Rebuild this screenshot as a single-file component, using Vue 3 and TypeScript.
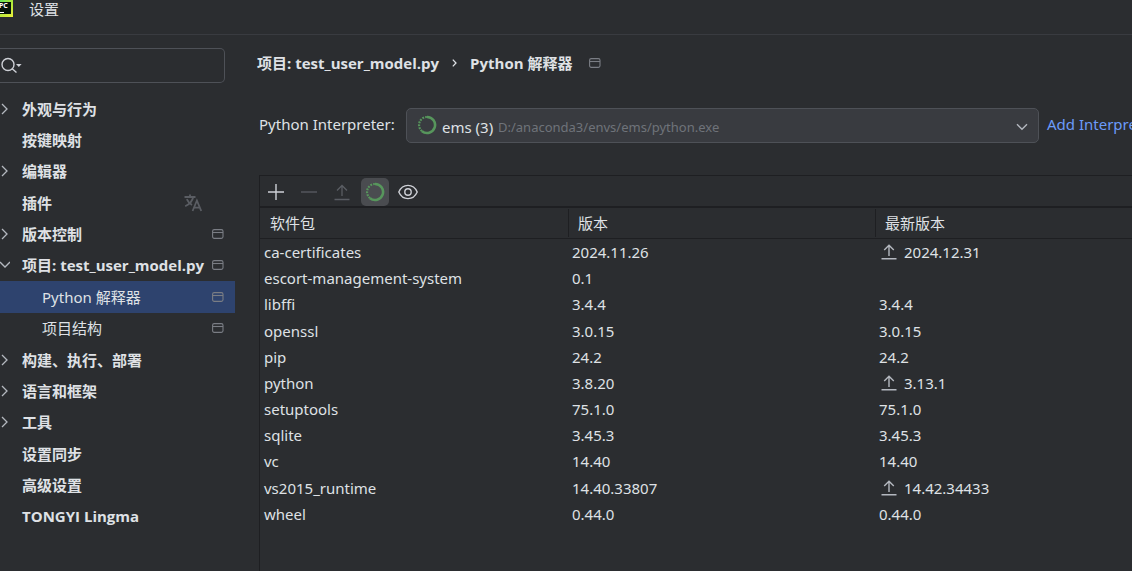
<script setup lang="ts">
import { ref } from 'vue'

interface NavItem {
  label: string
  arrow?: 'right' | 'down'
  child?: boolean
  project?: boolean
  translate?: boolean
}

interface Pkg {
  name: string
  version: string
  latest: string
  upgrade?: boolean
}

const nav: NavItem[] = [
  { label: '外观与行为', arrow: 'right' },
  { label: '按键映射' },
  { label: '编辑器', arrow: 'right' },
  { label: '插件', translate: true },
  { label: '版本控制', arrow: 'right', project: true },
  { label: '项目: test_user_model.py', arrow: 'down', project: true },
  { label: 'Python 解释器', child: true, project: true },
  { label: '项目结构', child: true, project: true },
  { label: '构建、执行、部署', arrow: 'right' },
  { label: '语言和框架', arrow: 'right' },
  { label: '工具', arrow: 'right' },
  { label: '设置同步' },
  { label: '高级设置' },
  { label: 'TONGYI Lingma' },
]

const packages: Pkg[] = [
  { name: 'ca-certificates', version: '2024.11.26', latest: '2024.12.31', upgrade: true },
  { name: 'escort-management-system', version: '0.1', latest: '' },
  { name: 'libffi', version: '3.4.4', latest: '3.4.4' },
  { name: 'openssl', version: '3.0.15', latest: '3.0.15' },
  { name: 'pip', version: '24.2', latest: '24.2' },
  { name: 'python', version: '3.8.20', latest: '3.13.1', upgrade: true },
  { name: 'setuptools', version: '75.1.0', latest: '75.1.0' },
  { name: 'sqlite', version: '3.45.3', latest: '3.45.3' },
  { name: 'vc', version: '14.40', latest: '14.40' },
  { name: 'vs2015_runtime', version: '14.40.33807', latest: '14.42.34433', upgrade: true },
  { name: 'wheel', version: '0.44.0', latest: '0.44.0' },
]

const selected = ref('Python 解释器')
const search = ref('')
const interpreter = ref('ems')
</script>

<template>
  <div class="window">
    <header class="titlebar">
      <svg class="logo" width="13" height="18" viewBox="0 0 13 18" aria-hidden="true">
        <defs>
          <linearGradient id="logo-edge" x1="0" y1="0" x2="1" y2="1">
            <stop offset="0" stop-color="#3fe06a" />
            <stop offset="0.5" stop-color="#a8e83a" />
            <stop offset="1" stop-color="#ecf03c" />
          </linearGradient>
        </defs>
        <rect x="-6" y="0" width="19" height="17" fill="url(#logo-edge)" />
        <rect x="-4" y="2" width="15" height="12" fill="#06140a" />
        <text x="-1" y="8" font-size="7" font-weight="700" fill="#ffffff">PC</text>
        <rect x="0" y="12" width="4" height="1" fill="#ffffff" />
      </svg>
      <span>设置</span>
    </header>

    <div class="body">
      <aside class="sidebar">
        <div class="search">
          <svg width="22" height="18" viewBox="0 0 22 18" fill="none" aria-hidden="true">
            <circle cx="8" cy="7.5" r="6" stroke="#ced0d6" stroke-width="1.4" />
            <path d="M12.2 11.7L16.5 15.6" stroke="#ced0d6" stroke-width="1.4" />
            <path d="M16 7H21.6L18.8 10Z" fill="#ced0d6" />
          </svg>
          <input v-model="search" type="text" aria-label="搜索设置" />
        </div>
        <nav class="tree">
          <button
            v-for="item in nav"
            :key="item.label"
            type="button"
            class="node"
            :class="{ child: item.child, active: item.label === selected }"
            @click="selected = item.label"
          >
            <span class="arrow">
              <svg v-if="item.arrow === 'right'" width="10" height="12" viewBox="0 0 10 12" fill="none" aria-hidden="true">
                <path d="M2 1L7 6L2 11" stroke="#b4b8bf" stroke-width="1.3" />
              </svg>
              <svg v-else-if="item.arrow === 'down'" width="10" height="12" viewBox="0 0 10 12" fill="none" aria-hidden="true">
                <path d="M0 3L5 8L10 3" stroke="#b4b8bf" stroke-width="1.3" />
              </svg>
            </span>
            <span class="label">{{ item.label }}</span>
            <svg v-if="item.translate" class="translate" width="18" height="18" viewBox="0 0 18 18" fill="none" stroke="#5a5d63" stroke-width="1.8" aria-hidden="true">
              <path d="M0.5 3H11.5M6 0.5V3M9.2 3C8.6 6.2 5.5 10.2 1.2 12.2M2.8 5.2C4 8 5.8 9.7 8 11" />
              <path d="M8.6 17L12.9 6.5L17.2 17M10.2 13.6H15.6" />
            </svg>
            <svg v-if="item.project" class="project" width="12" height="12" viewBox="0 0 12 12" fill="none" aria-hidden="true">
              <rect x="0.6" y="1.6" width="10.4" height="8.8" rx="1.6" stroke="#7a7d84" stroke-width="1.1" />
              <path d="M1 4.5H11" stroke="#7a7d84" stroke-width="1.1" />
            </svg>
          </button>
        </nav>
      </aside>

      <main class="content">
        <div class="crumbs">
          <span>项目: test_user_model.py</span>
          <svg width="5" height="8" viewBox="0 0 5 8" fill="none" aria-hidden="true">
            <path d="M0.8 0.6L4 4L0.8 7.4" stroke="#dfe1e5" stroke-width="1.3" />
          </svg>
          <span>Python 解释器</span>
          <svg width="12" height="12" viewBox="0 0 12 12" fill="none" aria-hidden="true">
            <rect x="0.6" y="1.6" width="10.4" height="8.8" rx="1.6" stroke="#7a7d84" stroke-width="1.1" />
            <path d="M1 4.5H11" stroke="#7a7d84" stroke-width="1.1" />
          </svg>
        </div>

        <div class="interpreter">
          <label for="interpreter">Python Interpreter:</label>
          <div class="combo">
            <select id="interpreter" v-model="interpreter">
              <option value="ems">ems (3)</option>
            </select>
            <svg class="spinner" width="20" height="20" viewBox="0 0 20 20" fill="none" aria-hidden="true">
              <path d="M10 2A8 8 0 1 1 5 16.2" stroke="#57965c" stroke-width="2.6" />
              <path d="M5 16.2A8 8 0 0 1 10 2" stroke="#57965c" stroke-width="2.2" stroke-dasharray="1.8 1.1" />
            </svg>
            <span class="path">D:/anaconda3/envs/ems/python.exe</span>
            <svg class="chevron" width="12" height="8" viewBox="0 0 12 8" fill="none" aria-hidden="true">
              <path d="M1 1.2L6 6.2L11 1.2" stroke="#b4b8bf" stroke-width="1.4" />
            </svg>
          </div>
          <a href="#">Add Interpreter</a>
        </div>

        <section class="packages">
          <div class="toolbar">
            <button type="button" aria-label="安装">
              <svg width="18" height="18" viewBox="0 0 18 18" aria-hidden="true">
                <path d="M9 1V17M1 9H17" stroke="#ced0d6" stroke-width="1.4" />
              </svg>
            </button>
            <button type="button" aria-label="卸载" disabled>
              <svg width="18" height="18" viewBox="0 0 18 18" aria-hidden="true">
                <path d="M1 9H17" stroke="#5a5d63" stroke-width="1.3" />
              </svg>
            </button>
            <button type="button" aria-label="升级" disabled>
              <svg width="18" height="18" viewBox="0 0 18 18" fill="none" aria-hidden="true">
                <path d="M9 13V3M4 7.5L9 2.5L14 7.5M1.5 16.5H16.5" stroke="#5a5d63" stroke-width="1.3" />
              </svg>
            </button>
            <button type="button" class="on" aria-label="使用 Conda 软件包管理器">
              <svg width="20" height="20" viewBox="0 0 20 20" fill="none" aria-hidden="true">
                <path d="M10 2A8 8 0 1 1 5 16.2" stroke="#57965c" stroke-width="2.6" />
                <path d="M5 16.2A8 8 0 0 1 10 2" stroke="#57965c" stroke-width="2.2" stroke-dasharray="1.8 1.1" />
              </svg>
            </button>
            <button type="button" aria-label="显示早期版本">
              <svg width="20" height="16" viewBox="0 0 20 16" fill="none" stroke="#ced0d6" stroke-width="1.4" aria-hidden="true">
                <path d="M0.8 8C2.6 3.8 6 1.4 10 1.4S17.4 3.8 19.2 8C17.4 12.2 14 14.6 10 14.6S2.6 12.2 0.8 8Z" />
                <circle cx="10" cy="8" r="3.2" />
              </svg>
            </button>
          </div>

          <table>
            <colgroup>
              <col class="c-name" />
              <col class="c-version" />
              <col />
            </colgroup>
            <thead>
              <tr>
                <th scope="col"><span>软件包</span></th>
                <th scope="col"><span>版本</span></th>
                <th scope="col"><span>最新版本</span></th>
              </tr>
            </thead>
            <tbody>
              <tr v-for="pkg in packages" :key="pkg.name">
                <td>{{ pkg.name }}</td>
                <td>{{ pkg.version }}</td>
                <td>
                  <span class="latest">
                    <svg v-if="pkg.upgrade" width="19" height="18" viewBox="0 0 19 18" fill="none" aria-hidden="true">
                      <path d="M10 13V2.5M5.2 7L10 2.2L14.8 7M2.5 15.8H17.5" stroke="#b4b8bf" stroke-width="1.4" />
                    </svg>
                    {{ pkg.latest }}
                  </span>
                </td>
              </tr>
            </tbody>
          </table>
        </section>
      </main>
    </div>
  </div>
</template>

<style>
body {
  margin: 0;
  background: #2b2d30;
}
</style>

<style scoped>
.window {
  display: flex;
  flex-direction: column;
  min-height: 100vh;
  overflow: hidden;
  background: #2b2d30;
  color: #dfe1e5;
  font-family: "Noto Sans", "Noto Sans CJK SC", sans-serif;
  font-size: 15px;
  line-height: 20px;
}
button,
input,
select {
  font: inherit;
  color: inherit;
}
button {
  margin: 0;
  padding: 0;
  border: 0;
  background: none;
}
svg {
  display: block;
  flex: none;
}
.titlebar {
  display: flex;
  align-items: flex-start;
  gap: 16px;
  height: 34px;
  border-bottom: 1px solid #393b40;
}
.titlebar span {
  line-height: 18px;
}
.body {
  display: flex;
  flex: 1;
}
.sidebar {
  flex: none;
  width: 235px;
  padding-top: 13px;
}
.search {
  display: flex;
  align-items: center;
  height: 33px;
  margin-right: 10px;
  border: 1px solid #4e5157;
  border-left: 0;
  border-radius: 0 5px 5px 0;
}
.search input {
  flex: 1;
  min-width: 0;
  padding: 0 4px;
  border: 0;
  outline: 0;
  background: none;
}
.tree {
  display: grid;
  grid-auto-rows: 1fr;
  min-height: 439px;
  margin-top: 10px;
}
.node {
  display: flex;
  align-items: center;
  padding-right: 11px;
  text-align: left;
  font-family: "Open Sans", "Noto Sans CJK SC", sans-serif;
  font-weight: 700;
}
.node.child {
  padding-left: 20px;
  font-family: "Noto Sans", "Noto Sans CJK SC", sans-serif;
  font-weight: 400;
}
.node.active {
  background: #2e436e;
}
.arrow {
  flex: none;
  width: 22px;
}
.label {
  flex: 1;
  white-space: nowrap;
}
.translate {
  margin-right: 22px;
}
.content {
  display: flex;
  flex: 1;
  flex-direction: column;
  min-width: 0;
  padding: 18px 0 0 24px;
}
.crumbs {
  display: flex;
  align-items: center;
  gap: 13px;
  margin-left: -2px;
  font-family: "Open Sans", "Noto Sans CJK SC", sans-serif;
  font-weight: 700;
}
.crumbs svg:last-child {
  margin-left: 4px;
}
.interpreter {
  display: flex;
  align-items: center;
  gap: 8px;
  margin-top: 35px;
  white-space: nowrap;
}
.interpreter label,
.interpreter a {
  padding-bottom: 3px;
}
.interpreter label {
  min-width: 139px;
}
.interpreter a {
  flex: none;
  width: 85px;
  color: #6b9bfa;
  text-decoration: none;
}
.combo {
  display: grid;
  flex: 1;
  align-items: center;
  min-width: 0;
}
.combo > * {
  grid-area: 1 / 1;
}
.combo select {
  height: 35px;
  padding: 2px 30px 0 35px;
  border: 1px solid #4e5157;
  border-radius: 5px;
  outline: 0;
  background: #393b40;
  appearance: none;
}
.combo svg,
.combo .path {
  pointer-events: none;
}
.spinner {
  margin: 0 0 2px 11px;
}
.path {
  margin-left: 92px;
  padding-top: 3px;
  color: #6f737a;
  font-size: 13px;
}
.chevron {
  justify-self: end;
  margin: 2px 11px 0 0;
}
.packages {
  flex: 1;
  margin-top: 32px;
  border: solid #1e1f22;
  border-width: 1px 0 0 1px;
}
.toolbar {
  display: flex;
  align-items: center;
  gap: 5px;
  height: 29px;
  padding: 1px 0 0 2px;
  border-bottom: 2px solid #1e1f22;
}
.toolbar button {
  display: grid;
  place-items: center;
  width: 28px;
  height: 28px;
  border-radius: 5px;
}
.toolbar .on {
  background: #4a4c50;
}
table {
  width: 100%;
  height: 319px;
  table-layout: fixed;
  border-spacing: 0;
}
.c-name {
  width: 308px;
}
.c-version {
  width: 307px;
}
th {
  height: 30px;
  padding: 0;
  border-bottom: 1px solid #1e1f22;
  text-align: left;
  font-weight: 400;
}
th span {
  display: block;
  padding: 4px 10px;
}
th + th span {
  border-left: 1px solid #1e1f22;
  padding-left: 9px;
}
td {
  padding: 0 4px;
}
.latest {
  display: flex;
  align-items: center;
  gap: 6px;
}
</style>
